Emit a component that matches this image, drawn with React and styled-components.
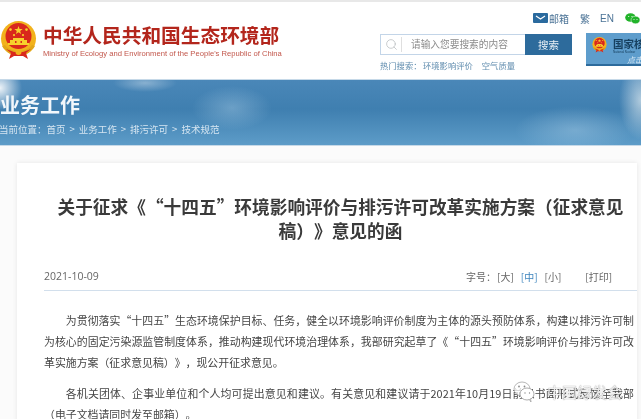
import React from "react";
import styled, { createGlobalStyle } from "styled-components";
import { Search } from "lucide-react";

// full-width punctuation, kept as escapes
const COMMA = "\uFF0C";
const COLON = "\uFF1A";
const OPEN = "\uFF08";
const CLOSE = "\uFF09";

const GlobalStyle = createGlobalStyle`
  html, body {
    margin: 0;
    height: 100%;
    overflow: hidden;
    background: #fff;
  }
  body {
    font-family: "Noto Sans CJK SC", "Liberation Sans", sans-serif;
    color: #444;
    text-spacing-trim: space-all;
  }
`;

const Page = styled.div`
  position: relative;
  width: 641px;
  height: 419px;
  overflow: hidden;
  background: #fbfbfb;
  border-top: 2px solid #e8e8e8;
  box-sizing: border-box;
  filter: blur(0.45px);
`;

const Header = styled.header`
  display: flex;
  justify-content: space-between;
  height: 77px;
  background: #fff;
`;

const Brand = styled.div`
  display: flex;
  gap: 6px;
  padding-top: 19px;
  height: 40px;
`;

const BrandText = styled.div`
  display: flex;
  flex-direction: column;
  padding-top: 1px;
`;

const BrandName = styled.div`
  font-size: 19.7px;
  line-height: 26px;
  font-weight: 700;
  color: #b3261c;
  white-space: nowrap;
`;

const BrandEnglish = styled.div`
  font-family: "Liberation Sans", sans-serif;
  font-size: 7.65px;
  line-height: 11px;
  color: #c2574c;
  white-space: nowrap;
`;

const HeaderRight = styled.div`
  width: 261px;
  flex: none;
  padding-top: 8px;
`;

const TopLinks = styled.div`
  display: flex;
  align-items: center;
  height: 16px;
  margin-left: 153px;
  font-size: 10px;
  color: #4b7396;
  white-space: nowrap;
`;

const TopLink = styled.span`
  display: flex;
  align-items: center;
  gap: 1px;
  margin-right: ${(p) => p.$gap}px;
  font-family: ${(p) => (p.$latin ? '"Liberation Sans", sans-serif' : "inherit")};
`;

const SearchRow = styled.div`
  display: flex;
  margin-top: 8px;
`;

const SearchColumn = styled.div`
  width: 192px;
  flex: none;
`;

const SearchBox = styled.div`
  display: flex;
  align-items: stretch;
  height: 21px;
  box-sizing: border-box;
  border: 1px solid #c3d5e8;
`;

const SearchIconCell = styled.div`
  display: flex;
  align-items: center;
  justify-content: center;
  width: 20px;
  color: #b4b8bb;
  border-right: 1px solid #dfdfdf;
  margin: 2px 0;
`;

const SearchHint = styled.div`
  flex: 1;
  padding-left: 9px;
  font-size: 9.7px;
  line-height: 19px;
  color: #8b8b8b;
  white-space: nowrap;
`;

const SearchButton = styled.div`
  width: 47px;
  margin: -1px;
  background: #2d6b9c;
  color: #e8f0f6;
  font-size: 10.5px;
  line-height: 21px;
  text-align: center;
`;

const HotRow = styled.div`
  display: flex;
  margin-top: 4px;
  font-size: 8.3px;
  line-height: 13px;
  color: #5f8cae;
  white-space: nowrap;
`;

const HotLabel = styled.span`
  width: 43px;
`;

const HotItem = styled.span`
  margin-right: 9px;
`;

const Badge = styled.div`
  display: flex;
  gap: 6px;
  width: 60px;
  height: 33px;
  margin: -1px 0 0 14px;
  flex: none;
  box-sizing: border-box;
  padding: 4px 0 0 6px;
  background: #5e9dcc;
  border-bottom: 2px solid #2d6b9c;
  overflow: hidden;
`;

const BadgeText = styled.div`
  white-space: nowrap;
`;

const BadgeTitle = styled.div`
  font-size: 10.5px;
  line-height: 13px;
  font-weight: 700;
  color: #17405f;
`;

const BadgeSub = styled.div`
  font-family: "Liberation Sans", sans-serif;
  font-size: 3px;
  line-height: 4px;
  color: #17405f;
`;

const BadgeHint = styled.div`
  margin: 1px 0 0 14px;
  font-size: 8px;
  line-height: 10px;
  font-style: italic;
  color: #d8e9f5;
`;

const Banner = styled.section`
  height: 67px;
  box-sizing: border-box;
  padding-top: 11px;
  color: #fff;
  border-top: 1px solid #c6d9e8;
  border-bottom: 1px solid #c6d9e8;
  background:
    radial-gradient(circle 22px at 0px 8px, rgba(255, 255, 255, 0.9), rgba(255, 255, 255, 0)),
    radial-gradient(ellipse 32px 9px at 145px 3px, rgba(255, 255, 255, 0.35), rgba(255, 255, 255, 0)),
    radial-gradient(ellipse 40px 22px at 232px 28px, rgba(190, 220, 240, 0.35), rgba(190, 220, 240, 0)),
    radial-gradient(ellipse 60px 24px at 575px 50px, rgba(190, 220, 240, 0.35), rgba(190, 220, 240, 0)),
    radial-gradient(ellipse 22px 40px at 641px 20px, rgba(225, 235, 240, 0.7), rgba(225, 235, 240, 0)),
    linear-gradient(to bottom, #4a87b8 0%, #3f7fb0 45%, #5d9cc8 100%);
`;

const BannerTitle = styled.h2`
  margin: 0;
  font-size: 20px;
  line-height: 28px;
  font-weight: 700;
  color: #f2f7fb;
  white-space: nowrap;
`;

const Crumbs = styled.div`
  display: flex;
  gap: 4px;
  margin: 3px 0 0 -1px;
  font-size: 9.5px;
  line-height: 14px;
  color: #d5e5f1;
  white-space: nowrap;
`;

const Article = styled.article`
  width: 620px;
  margin: 17px 0 0 17px;
  box-sizing: border-box;
  height: 260px;
  padding: 31px 0 0 27px;
  background: #fff;
  box-shadow: 0 0 5px rgba(0, 0, 0, 0.09);
`;

const Title = styled.h1`
  margin: 0;
  padding: 0 5px;
  font-size: 17.7px;
  line-height: 24px;
  font-weight: 700;
  color: #3a3a3a;
  text-align: center;
  font-variant-east-asian: full-width;
`;

const Meta = styled.div`
  display: flex;
  justify-content: space-between;
  align-items: center;
  height: 20px;
  margin-top: 24px;
  padding-bottom: 4px;
  border-bottom: 1px solid #d2dfec;
  font-size: 10px;
  color: #666;
`;

const DateText = styled.span`
  font-family: "Open Sans", "Liberation Sans", sans-serif;
  font-size: 10.5px;
`;

const Tools = styled.div`
  display: flex;
  width: 171px;
  flex: none;
`;

const Tool = styled.span`
  color: ${(p) => (p.$active ? "#3d84bd" : "#666")};
  margin-right: ${(p) => p.$gap}px;
  white-space: nowrap;
`;

const Body = styled.div`
  width: 590px;
  padding-top: 19px;
  font-size: 10.9px;
  line-height: 21px;
  color: #454545;
`;

const Para = styled.p`
  margin: 0 0 10px;
  text-indent: 2em;
  text-align: justify;
  font-variant-east-asian: ${(p) => (p.$wide ? "full-width" : "normal")};
`;

const Watermark = styled.div`
  position: absolute;
  left: 513px;
  top: 378px;
  display: flex;
  align-items: center;
  gap: 12px;
  font-size: 15px;
  line-height: 22px;
  color: rgba(255, 255, 255, 0.88);
  text-shadow: 0 0 1px rgba(70, 70, 70, 0.8);
  white-space: nowrap;
`;

const Emblem = ({ size }) => (
  <svg width={size} height={size * 1.06} viewBox="0 0 37 39" style={{ flex: "none" }}>
    <circle cx="18.5" cy="17.5" r="17.5" fill="#f2b21c" />
    <circle cx="18.5" cy="15" r="13" fill="#d9281c" />
    <path d="M18.5 5l1.1 3h3.1l-2.5 1.9.9 3-2.6-1.8-2.6 1.8.9-3-2.5-1.9h3.100z" fill="#f7d02c" />
    <circle cx="10.500" cy="8.500" r="1.300" fill="#f7d02c" />
    <circle cx="14" cy="14" r="1.100" fill="#f7d02c" />
    <circle cx="23" cy="14" r="1.100" fill="#f7d02c" />
    <circle cx="26.500" cy="8.500" r="1.300" fill="#f7d02c" />
    <path d="M8 22h21v2H8zM10 19h17v3H10zM13 17h11v2H13z" fill="#f7d02c" />
    <path d="M15 20h1.500v2H15zM20.500 20H22v2h-1.500z" fill="#d9281c" />
    <path d="M2 25c4 7 10 9 16.500 9S31 32 35 25l-3-1c-3 4-8 6-13.500 6S8 28 5 24z" fill="#e2a61a" />
    <path d="M6 28l5 4-2 6 5-3h9l5 3-2-6 5-4-8 3h-9z" fill="#d9281c" />
    <circle cx="18.500" cy="31" r="3" fill="#f2b21c" />
  </svg>
);

const MailIcon = () => (
  <svg width="15" height="10" viewBox="0 0 15 10">
    <rect width="15" height="10" rx="1" fill="#2a6a9e" />
    <path d="M3 3l4.500 3L12 3" fill="none" stroke="#fff" strokeWidth="1.200" />
  </svg>
);

const WechatIcon = () => (
  <svg width="15" height="11" viewBox="0 0 15 11">
    <ellipse cx="5.500" cy="4.500" rx="5.300" ry="4.300" fill="#22b32a" />
    <ellipse cx="10.500" cy="7" rx="4.500" ry="3.800" fill="#22b32a" stroke="#fff" strokeWidth="0.500" />
    <circle cx="3.700" cy="3.500" r="0.600" fill="#fff" />
    <circle cx="7" cy="3.500" r="0.600" fill="#fff" />
    <circle cx="9" cy="6.500" r="0.500" fill="#fff" />
    <circle cx="12" cy="6.500" r="0.500" fill="#fff" />
  </svg>
);

const WatermarkIcon = () => (
  <svg width="22" height="24" viewBox="0 0 22 24">
    <ellipse cx="9" cy="9" rx="8" ry="7" fill="#fff" fillOpacity="0.75" stroke="#9a9a9a" strokeWidth="0.700" />
    <ellipse cx="14" cy="14" rx="7" ry="6" fill="#fff" stroke="#8a8a8a" strokeWidth="0.700" />
    <path d="M16 19l2 3-.5-3.500" fill="#fff" stroke="#8a8a8a" strokeWidth="0.600" />
    <circle cx="6" cy="6.500" r="0.900" fill="#8a8a8a" />
    <circle cx="11.500" cy="6.500" r="0.900" fill="#8a8a8a" />
    <circle cx="12" cy="13" r="0.700" fill="#8a8a8a" />
    <circle cx="16.500" cy="13" r="0.700" fill="#8a8a8a" />
  </svg>
);

export default function App() {
  return (
    <>
      <GlobalStyle />
      <Page>
        <Header>
          <Brand>
            <Emblem size={37} />
            <BrandText>
              <BrandName>中华人民共和国生态环境部</BrandName>
              <BrandEnglish>Ministry of Ecology and Environment of the People's Republic of China</BrandEnglish>
            </BrandText>
          </Brand>
          <HeaderRight>
            <TopLinks>
              <TopLink $gap={11}>
                <MailIcon />
                邮箱
              </TopLink>
              <TopLink $gap={10}>繁</TopLink>
              <TopLink $gap={11} $latin>EN</TopLink>
              <WechatIcon />
            </TopLinks>
            <SearchRow>
              <SearchColumn>
                <SearchBox>
                  <SearchIconCell>
                    <Search size={13} strokeWidth={1.3} />
                  </SearchIconCell>
                  <SearchHint>请输入您要搜索的内容</SearchHint>
                  <SearchButton>搜索</SearchButton>
                </SearchBox>
                <HotRow>
                  <HotLabel>{`热门搜索${COLON}`}</HotLabel>
                  <HotItem>环境影响评价</HotItem>
                  <HotItem>空气质量</HotItem>
                </HotRow>
              </SearchColumn>
              <Badge>
                <Emblem size={15} />
                <BadgeText>
                  <BadgeTitle>国家核</BadgeTitle>
                  <BadgeSub>National Nuclear</BadgeSub>
                  <BadgeHint>点击</BadgeHint>
                </BadgeText>
              </Badge>
            </SearchRow>
          </HeaderRight>
        </Header>
        <Banner>
          <BannerTitle>业务工作</BannerTitle>
          <Crumbs>
            <span>{`当前位置${COLON}首页`}</span>
            <span>&gt;</span>
            <span>业务工作</span>
            <span>&gt;</span>
            <span>排污许可</span>
            <span>&gt;</span>
            <span>技术规范</span>
          </Crumbs>
        </Banner>
        <Article>
          <Title>{`关于征求《“十四五”环境影响评价与排污许可改革实施方案${OPEN}征求意见稿${CLOSE}》意见的函`}</Title>
          <Meta>
            <DateText>2021-10-09</DateText>
            <Tools>
              <Tool $gap={1}>{`字号${COLON}`}</Tool>
              <Tool $gap={7}>[大]</Tool>
              <Tool $gap={7} $active>[中]</Tool>
              <Tool $gap={24}>[小]</Tool>
              <Tool $gap={0}>[打印]</Tool>
            </Tools>
          </Meta>
          <Body>
            <Para $wide>
              {`为贯彻落实“十四五”生态环境保护目标、任务${COMMA}健全以环境影响评价制度为主体的源头预防体系${COMMA}构建以排污许可制为核心的固定污染源监管制度体系${COMMA}推动构建现代环境治理体系${COMMA}我部研究起草了《“十四五”环境影响评价与排污许可改革实施方案${OPEN}征求意见稿${CLOSE}》${COMMA}现公开征求意见。`}
            </Para>
            <Para>
              {`各机关团体、企事业单位和个人均可提出意见和建议。有关意见和建议请于2021年10月19日前以书面形式反馈至我部${OPEN}电子文档请同时发至邮箱${CLOSE}。`}
            </Para>
          </Body>
        </Article>
        <Watermark>
          <WatermarkIcon />
          中国绿发会
        </Watermark>
      </Page>
    </>
  );
}
